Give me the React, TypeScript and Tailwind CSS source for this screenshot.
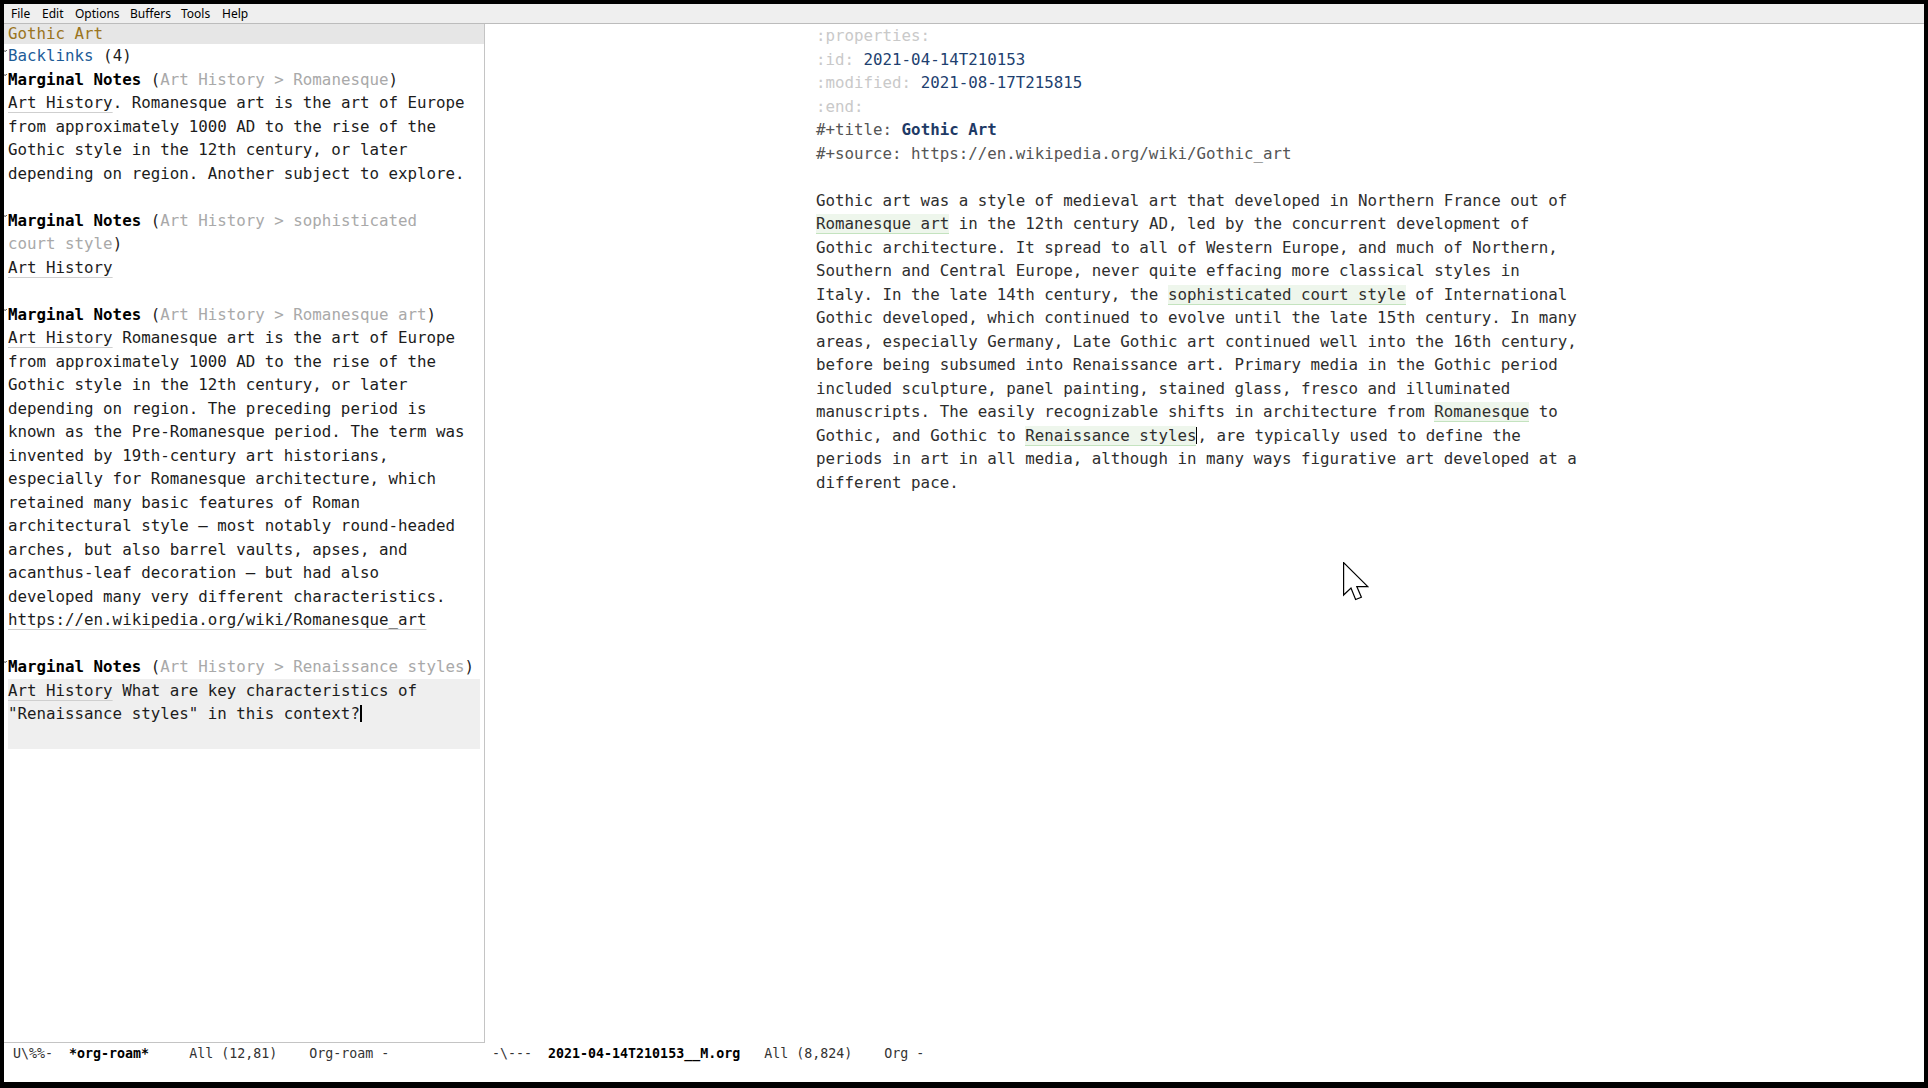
import type { ReactNode } from 'react'

// Shared text styles
const mono = "font-['DejaVu_Sans_Mono',monospace]"

const Line = ({ children, className = '' }: { children?: ReactNode; className?: string }) => (
  <div className={`h-[23.5px] whitespace-pre ${className}`}>{children}</div>
)

const Link = ({ children }: { children: ReactNode }) => (
  <span className="underline decoration-[#cfcfcf] underline-offset-[4px]">{children}</span>
)

const Hl = ({ children }: { children: ReactNode }) => (
  <span className="bg-[#eef6ec] border-b border-[#c4e3bf]">{children}</span>
)

const Crumb = ({ children }: { children: ReactNode }) => (
  <span className="text-[#a9a9a9]">{children}</span>
)

// Fold indicator drawn in the fringe
const Fold = () => (
  <svg className="absolute left-[-6px] top-[5px]" width="5" height="4" viewBox="0 0 5 4">
    <path d="M0.3 2.8 Q1.2 0.6 2.5 2 Q3.6 3.2 4.7 1" fill="none" stroke="#444" strokeWidth="1" />
  </svg>
)

const Heading = ({ children }: { children: ReactNode }) => (
  <Line className="relative">
    <Fold />
    {children}
  </Line>
)

const Note = ({ crumb }: { crumb: ReactNode }) => (
  <>
    <span className="font-bold text-black">Marginal Notes</span> ({crumb})
  </>
)

const Cursor = ({ thin }: { thin?: boolean }) => (
  <span className={`inline-block align-[-3px] h-[17px] bg-black ${thin ? 'w-[1px]' : 'w-[2px]'}`}></span>
)

const menu = [
  { label: 'File', w: 'w-[31px]' },
  { label: 'Edit', w: 'w-[33px]' },
  { label: 'Options', w: 'w-[55px]' },
  { label: 'Buffers', w: 'w-[51px]' },
  { label: 'Tools', w: 'w-[41px]' },
  { label: 'Help', w: 'w-[40px]' },
]

const LeftPane = () => (
  <div className="h-[1019px] border-r border-b border-[#c4c4c4] overflow-hidden">
    {/* Header line */}
    <div className="h-[20px] bg-[#e6e6e6] pl-[4px] leading-[20px] text-[#9a7420] whitespace-pre">Gothic Art</div>

    <div className="pl-[4px] text-[#1c1c1c]">
      <Heading>
        <span className="text-[#1d5c98]">Backlinks</span> (4)
      </Heading>
      <Heading>
        <Note crumb={<Crumb>Art History &gt; Romanesque</Crumb>} />
      </Heading>
      <Line><Link>Art History</Link>. Romanesque art is the art of Europe</Line>
      <Line>from approximately 1000 AD to the rise of the</Line>
      <Line>Gothic style in the 12th century, or later</Line>
      <Line>depending on region. Another subject to explore.</Line>
      <Line />
      <Heading>
        <span className="font-bold text-black">Marginal Notes</span> (<Crumb>Art History &gt; sophisticated</Crumb>
      </Heading>
      <Line><Crumb>court style</Crumb>)</Line>
      <Line><Link>Art History</Link></Line>
      <Line />
      <Heading>
        <Note crumb={<Crumb>Art History &gt; Romanesque art</Crumb>} />
      </Heading>
      <Line><Link>Art History</Link> Romanesque art is the art of Europe</Line>
      <Line>from approximately 1000 AD to the rise of the</Line>
      <Line>Gothic style in the 12th century, or later</Line>
      <Line>depending on region. The preceding period is</Line>
      <Line>known as the Pre-Romanesque period. The term was</Line>
      <Line>invented by 19th-century art historians,</Line>
      <Line>especially for Romanesque architecture, which</Line>
      <Line>retained many basic features of Roman</Line>
      <Line>architectural style – most notably round-headed</Line>
      <Line>arches, but also barrel vaults, apses, and</Line>
      <Line>acanthus-leaf decoration – but had also</Line>
      <Line>developed many very different characteristics.</Line>
      <Line><Link>https://en.wikipedia.org/wiki/Romanesque_art</Link></Line>
      <Line />
      <Heading>
        <Note crumb={<Crumb>Art History &gt; Renaissance styles</Crumb>} />
      </Heading>

      {/* Current note being edited */}
      <div className="w-[472px] bg-[#efefef]">
        <Line><Link>Art History</Link> What are key characteristics of</Line>
        <Line>"Renaissance styles" in this context?<Cursor /></Line>
        <Line />
      </div>
    </div>
  </div>
)

const RightPane = () => (
  <div className="h-[1019px] pl-[331px] text-[#2e2e2e] overflow-hidden">
    <Line className="text-[#c9c9c9]">:properties:</Line>
    <Line><span className="text-[#c9c9c9]">:id:</span> <span className="text-[#1e3f6f]">2021-04-14T210153</span></Line>
    <Line><span className="text-[#c9c9c9]">:modified:</span> <span className="text-[#1e3f6f]">2021-08-17T215815</span></Line>
    <Line className="text-[#c9c9c9]">:end:</Line>
    <Line><span className="text-[#555]">#+title:</span> <span className="font-bold text-[#1e3a66]">Gothic Art</span></Line>
    <Line className="text-[#555]">#+source: https://en.wikipedia.org/wiki/Gothic_art</Line>
    <Line />
    <Line>Gothic art was a style of medieval art that developed in Northern France out of</Line>
    <Line><Hl>Romanesque art</Hl> in the 12th century AD, led by the concurrent development of</Line>
    <Line>Gothic architecture. It spread to all of Western Europe, and much of Northern,</Line>
    <Line>Southern and Central Europe, never quite effacing more classical styles in</Line>
    <Line>Italy. In the late 14th century, the <Hl>sophisticated court style</Hl> of International</Line>
    <Line>Gothic developed, which continued to evolve until the late 15th century. In many</Line>
    <Line>areas, especially Germany, Late Gothic art continued well into the 16th century,</Line>
    <Line>before being subsumed into Renaissance art. Primary media in the Gothic period</Line>
    <Line>included sculpture, panel painting, stained glass, fresco and illuminated</Line>
    <Line>manuscripts. The easily recognizable shifts in architecture from <Hl>Romanesque</Hl> to</Line>
    <Line>Gothic, and Gothic to <Hl>Renaissance styles</Hl><Cursor thin />, are typically used to define the</Line>
    <Line>periods in art in all media, although in many ways figurative art developed at a</Line>
    <Line>different pace.</Line>
  </div>
)

export default function App() {
  return (
    <div className="relative w-[1928px] h-[1088px] bg-black pt-[4px] pl-[4px] pr-[4px] pb-[6px] overflow-hidden">
      <div className="w-[1920px] h-[1078px] bg-white flex flex-col">
        {/* Menu bar */}
        <div className="h-[20px] bg-[#efefef] border-b border-[#bcbcbc] flex items-center pl-[7px] font-['Noto_Sans',sans-serif] text-[12px] text-black">
          {menu.map((m) => (
            <span key={m.label} className={m.w}>{m.label}</span>
          ))}
        </div>

        {/* Windows */}
        <div className={`flex ${mono} text-[15.8px] leading-[23.5px]`}>
          <div className="w-[481px] shrink-0">
            <LeftPane />
          </div>
          <div className="flex-1">
            <RightPane />
          </div>
        </div>

        {/* Mode lines */}
        <div className={`flex h-[22px] leading-[22px] ${mono} text-[13.3px] text-[#333] whitespace-pre`}>
          <div className="w-[481px] shrink-0 pl-[9px]">
            U\%%-  <span className="font-bold text-black">*org-roam*</span>     All (12,81)    Org-roam -
          </div>
          <div className="flex-1 pl-[7px]">
            -\---  <span className="font-bold text-black">2021-04-14T210153__M.org</span>   All (8,824)    Org -
          </div>
        </div>

        {/* Echo area */}
        <div className="h-[16px]"></div>
      </div>

      {/* Mouse pointer */}
      <svg className="absolute left-[1343px] top-[562px]" width="27" height="40" viewBox="0 0 27 40">
        <path
          d="M0.6 0.6 L0.6 33 L8 26 L12.6 37.5 L18.4 35.2 L13.8 24.6 L24.8 24.6 Z"
          fill="white"
          stroke="black"
          strokeWidth="1.2"
          strokeLinejoin="miter"
        />
      </svg>
    </div>
  )
}
